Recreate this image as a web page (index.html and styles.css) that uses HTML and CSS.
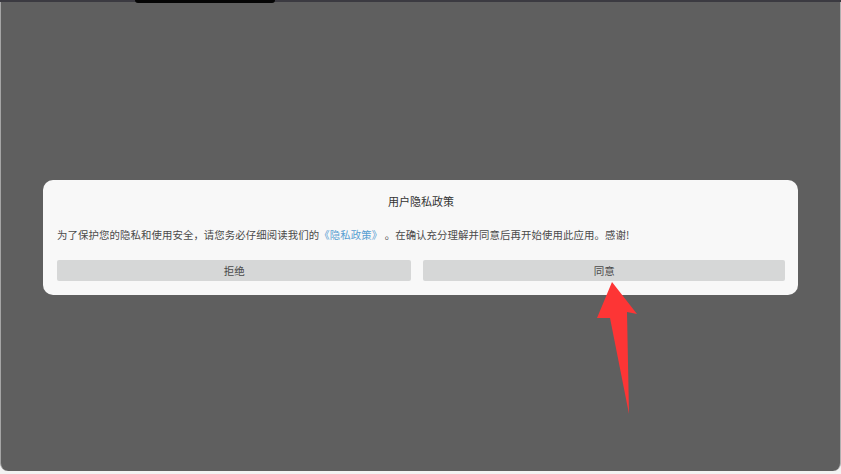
FILE: index.html
```html
<!DOCTYPE html>
<html lang="zh-CN">
<head>
    <meta charset="UTF-8">
    <meta name="viewport" content="width=device-width, initial-scale=1.0">
    <title>用户隐私政策</title>
    <link rel="stylesheet" href="styles.css">
</head>
<body>
    <div class="topbar">
        <div class="notch"></div>
    </div>
    <div class="overlay">
        <div class="dialog">
            <h1 class="dialog-title">用户隐私政策</h1>
            <p class="dialog-text">为了保护您的隐私和使用安全，请您务必仔细阅读我们的<a href="#" class="policy-link">《隐私政策》</a> 。在确认充分理解并同意后再开始使用此应用。感谢!</p>
            <div class="button-row">
                <button type="button" class="btn">拒绝</button>
                <button type="button" class="btn">同意</button>
            </div>
        </div>
    </div>

    <!-- annotation arrow pointing at the agree button -->
    <svg class="arrow" width="841" height="474" viewBox="0 0 841 474">
        <polygon points="612,282 637,314 627,312 629,414 610,318 597,318" fill="#fd3535"/>
    </svg>
</body>
</html>
```

FILE: styles.css
```css
body {
    margin: 0;
    padding: 0;
    width: 841px;
    height: 474px;
    overflow: hidden;
    background-color: #f2f2f2;
    font-family: "Noto Sans CJK SC", "Noto Sans", sans-serif;
}
.topbar {
    height: 2px;
    background-color: #3b3a41;
    display: flex;
    padding-left: 135px;
}
.notch {
    width: 140px;
    height: 3px;
    background-color: #050505;
    border-radius: 0 0 3px 3px;
    position: relative;
    z-index: 1;
}
.overlay {
    height: 469px;
    background-color: #5f5f5f;
    border-left: 1px solid #a5a5a5;
    border-right: 1px solid #b0b0b0;
    border-radius: 0 0 8px 8px;
    display: flex;
    align-items: center;
    justify-content: center;
}
.dialog {
    width: 755px;
    box-sizing: border-box;
    background-color: #f8f8f8;
    border-radius: 10px;
    padding: 14px 13px 14px 14px;
    margin-top: 2px;
}
.dialog-title {
    margin: 0;
    font-size: 11px;
    line-height: 14px;
    font-weight: normal;
    color: #333;
    text-align: center;
}
.dialog-text {
    margin: 20px 0 18px 0;
    font-size: 10.4px;
    line-height: 14px;
    letter-spacing: 0.1px;
    color: #4a4a4a;
    white-space: nowrap;
}
.policy-link {
    color: #5aa0d2;
    text-decoration: none;
}
.button-row {
    display: grid;
    grid-template-columns: 354fr 361fr;
    gap: 12px;
}
.btn {
    height: 21px;
    border: none;
    border-radius: 2px;
    background-color: #d6d7d7;
    color: #4a4a4a;
    font-family: "Noto Sans CJK SC", "Noto Sans", sans-serif;
    font-size: 10.5px;
    padding: 0;
}
.arrow {
    position: absolute;
    left: 0;
    top: 0;
    pointer-events: none;
}
```
